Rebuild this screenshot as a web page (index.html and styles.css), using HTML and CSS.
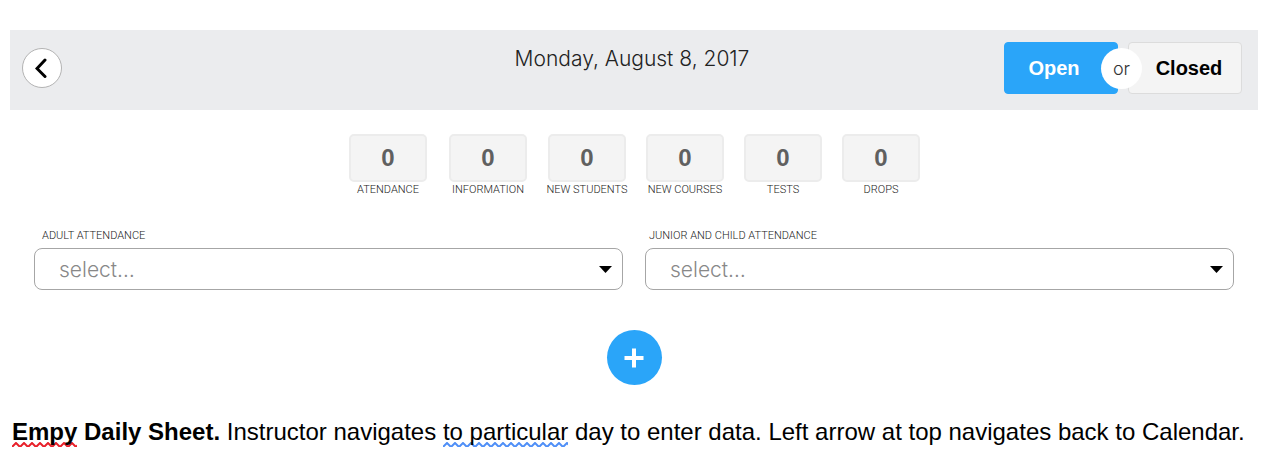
FILE: index.html
```html
<!DOCTYPE html>
<html lang="en">
<head>
<meta charset="utf-8">
<meta name="viewport" content="width=device-width, initial-scale=1">
<title>Daily Sheet</title>
<link rel="stylesheet" href="styles.css">
</head>
<body>
<main class="sheet">
  <header class="topbar">
    <div class="topbar-side">
      <button class="back" type="button" aria-label="Back to calendar">
        <svg width="12" height="20" viewBox="0 0 12 20" aria-hidden="true"><path d="M10 2 2 10.500 10 18.500"/></svg>
      </button>
    </div>
    <h1 class="date">Monday, August 8, 2017</h1>
    <div class="topbar-side status">
      <button class="status-btn open" type="button">Open</button>
      <span class="or">or</span>
      <button class="status-btn closed" type="button">Closed</button>
    </div>
  </header>

  <section class="stats">
    <div class="stat"><span class="count">0</span><span class="caption">ATENDANCE</span></div>
    <div class="stat"><span class="count">0</span><span class="caption">INFORMATION</span></div>
    <div class="stat"><span class="count">0</span><span class="caption">NEW STUDENTS</span></div>
    <div class="stat"><span class="count">0</span><span class="caption">NEW COURSES</span></div>
    <div class="stat"><span class="count">0</span><span class="caption">TESTS</span></div>
    <div class="stat"><span class="count">0</span><span class="caption">DROPS</span></div>
  </section>

  <form class="fields">
    <div class="field">
      <label for="adult">ADULT ATTENDANCE</label>
      <select id="adult"><option>select…</option></select>
    </div>
    <div class="field">
      <label for="junior">JUNIOR AND CHILD ATTENDANCE</label>
      <select id="junior"><option>select…</option></select>
    </div>
  </form>

  <button class="add" type="button" aria-label="Add">
    <svg width="20" height="20" viewBox="0 0 20 20" aria-hidden="true"><path d="M10 .5V19.500M.5 10H19.500"/></svg>
  </button>
</main>
<p class="note"><strong><span class="spelling">Empy</span> Daily Sheet.</strong> Instructor navigates <span class="grammar">to particular</span> day to enter data. Left arrow at top navigates back to Calendar.</p>
</body>
</html>
```
FILE: styles.css
```css
* {
  box-sizing: border-box;
}

body {
  margin: 0;
  padding: 30px 22px 0 10px;
  background: #fff;
  color: #000;
  font-family: "Liberation Sans", Arial, sans-serif;
}

button {
  font: inherit;
  padding: 0;
  cursor: pointer;
}

.topbar {
  display: grid;
  grid-template-columns: 1fr auto 1fr;
  padding: 12px 16px 16px 12px;
  background: #ebecee;
}

.topbar-side {
  display: flex;
  align-items: center;
}

.back {
  display: grid;
  place-items: center;
  width: 40px;
  height: 40px;
  padding-right: 2px;
  border: 1px solid #b3b3b3;
  border-radius: 50%;
  background: #fff;
}

.back path {
  fill: none;
  stroke: #000;
  stroke-width: 3;
  stroke-linecap: round;
}

.date {
  margin: 3px 0 0;
  color: #222;
  font-family: Inter, "Liberation Sans", sans-serif;
  font-size: 21px;
  font-weight: 300;
  line-height: 28px;
}

.status {
  justify-content: flex-end;
}

.status-btn {
  width: 114px;
  height: 52px;
  border: 1px solid #dcdcdc;
  border-radius: 4px;
  background: #f4f4f4;
  font-size: 20px;
  font-weight: 700;
}

.open {
  padding-right: 14px;
  border-color: #2aa5f9;
  background: #2aa5f9;
  color: #fff;
}

.closed {
  padding-left: 8px;
}

.or {
  z-index: 1;
  width: 41px;
  margin: 0 -14px 0 -17px;
  border-radius: 50%;
  background: #fff;
  color: #333;
  font-family: Inter, "Liberation Sans", sans-serif;
  font-size: 18px;
  font-weight: 300;
  line-height: 41px;
  text-align: center;
}

.stats {
  display: grid;
  grid-template-columns: 80px 80px repeat(4, 78px);
  justify-content: center;
  gap: 20px;
  margin-top: 24px;
}

.stat {
  display: flex;
  flex-direction: column;
  align-items: center;
}

.count {
  width: 78px;
  border: 2px solid #ececec;
  border-radius: 5px;
  background: #f4f4f4;
  color: #606060;
  font-size: 24px;
  font-weight: 700;
  line-height: 44px;
  text-align: center;
}

.caption,
.field label {
  color: #222;
  font-family: Roboto, "Liberation Sans", sans-serif;
  font-size: 11px;
  font-weight: 300;
  line-height: 15px;
  white-space: nowrap;
}

.fields {
  display: grid;
  grid-template-columns: 1fr 1fr;
  gap: 22px;
  margin: 31px 24px 0;
}

.field {
  display: flex;
  flex-direction: column;
  gap: 5px;
}

.field label {
  padding-left: 8px;
}

.field:last-child label {
  padding-left: 4px;
}

.field select {
  appearance: none;
  width: 100%;
  height: 42px;
  padding: 0 24px;
  border: 1px solid #a6a6a6;
  border-radius: 8px;
  background: #fff url("data:image/svg+xml,%3Csvg xmlns='http://www.w3.org/2000/svg' width='13' height='7'%3E%3Cpath d='M0 0H13L6.500 7Z'/%3E%3C/svg%3E") no-repeat right 10px center;
  color: #888;
  font-family: Inter, "Liberation Sans", sans-serif;
  font-size: 21px;
  font-weight: 300;
}

.add {
  display: grid;
  place-items: center;
  width: 55px;
  height: 55px;
  margin: 40px auto 0;
  border: 0;
  border-radius: 50%;
  background: #2aa5f9;
}

.add path {
  fill: none;
  stroke: #fff;
  stroke-width: 4;
}

.note {
  margin: 32px -20px 0 2px;
  font-size: 24px;
  line-height: 30px;
}

.spelling,
.grammar {
  background-position: left bottom;
  background-repeat: repeat-x;
  padding-bottom: 3px;
}

.spelling {
  background-image: url("data:image/svg+xml,%3Csvg xmlns='http://www.w3.org/2000/svg' width='8' height='6'%3E%3Cpath d='M-1 6 4 1 9 6' fill='none' stroke='%23e8202a' stroke-width='2'/%3E%3C/svg%3E");
}

.grammar {
  background-image: url("data:image/svg+xml,%3Csvg xmlns='http://www.w3.org/2000/svg' width='8' height='6'%3E%3Cpath d='M-1 6 4 1 9 6' fill='none' stroke='%234f8ff7' stroke-width='2'/%3E%3C/svg%3E");
}
```
